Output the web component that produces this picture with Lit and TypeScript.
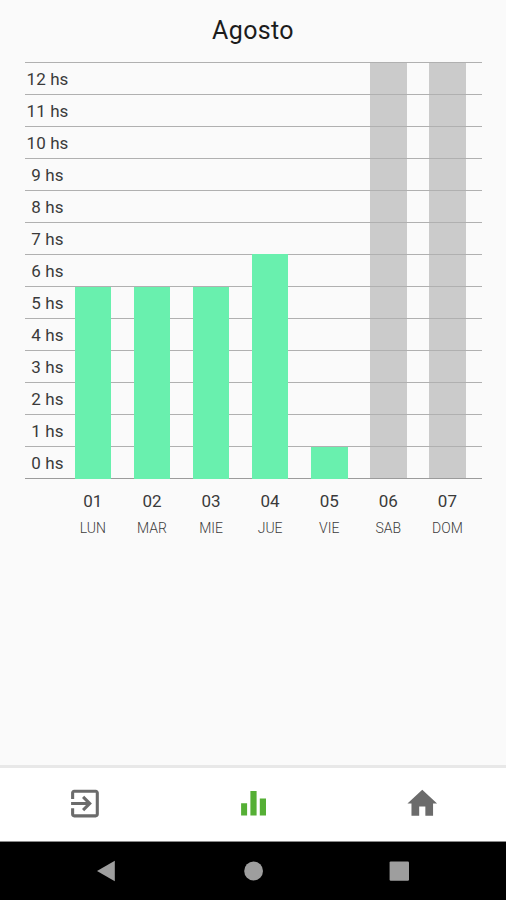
import { LitElement, html, css } from "lit";
import { customElement, state } from "lit/decorators.js";

interface Day {
  num: string;
  name: string;
  hours: number;
  off?: boolean;
}

const MAX_HOURS = 12;
const ROWS = MAX_HOURS + 1;

@customElement("hours-chart")
class HoursChart extends LitElement {
  @state() private days: Day[] = [
    { num: "01", name: "LUN", hours: 5 },
    { num: "02", name: "MAR", hours: 5 },
    { num: "03", name: "MIE", hours: 5 },
    { num: "04", name: "JUE", hours: 6 },
    { num: "05", name: "VIE", hours: 0 },
    { num: "06", name: "SAB", hours: 0, off: true },
    { num: "07", name: "DOM", hours: 0, off: true },
  ];

  static styles = css`
    :host { display: block; padding: 0 24px 0 25px; }
    .plot { display: grid; grid-template: 417px / 1fr; isolation: isolate; }
    .scale, .bars { grid-area: 1 / 1; }
    .scale {
      z-index: 1;
      display: flex;
      flex-direction: column;
      border-bottom: 1px solid #b3b3b3;
    }
    .row {
      flex: 1;
      box-sizing: border-box;
      border-top: 1px solid #b0b0b0;
      box-shadow: 0 1px 0 rgba(0, 0, 0, 0.13);
      display: flex;
      align-items: center;
    }
    .hour {
      width: 45px;
      text-align: center;
      font-size: 17px;
      letter-spacing: 0.1px;
      line-height: 20px;
      color: #3a3a3a;
    }
    .bars, .labels {
      display: grid;
      grid-template-columns: repeat(7, 59.1px);
      margin-left: 38.3px;
      justify-items: center;
    }
    .bars { align-items: end; }
    .bar { width: 36.6px; background: #69f0ae; z-index: 2; }
    .bar.off { background: #cbcbcb; z-index: 0; }
    .labels { margin-top: 11px; }
    .day { display: flex; flex-direction: column; align-items: center; }
    .num { font-size: 17px; line-height: 22px; color: #3a3a3a; }
    .name { font-size: 14px; line-height: 18px; margin-top: 7px; color: #3c3c3c; font-weight: 300; }
  `;

  render() {
    const hours = Array.from({ length: ROWS }, (_, i) => MAX_HOURS - i);
    return html`
      <div class="plot">
        <div class="scale">
          ${hours.map((h) => html`<div class="row"><span class="hour">${h} hs</span></div>`)}
        </div>
        <div class="bars">
          ${this.days.map(
            (d) => html`<div
              class="bar ${d.off ? "off" : ""}"
              style="height:${d.off ? 100 : ((d.hours + 1) / ROWS) * 100}%"
            ></div>`
          )}
        </div>
      </div>
      <div class="labels">
        ${this.days.map(
          (d) => html`<div class="day"><span class="num">${d.num}</span><span class="name">${d.name}</span></div>`
        )}
      </div>
    `;
  }
}

@customElement("tab-bar")
class TabBar extends LitElement {
  static styles = css`
    :host {
      display: grid;
      grid-template-columns: repeat(3, 1fr);
      place-items: center;
      box-sizing: border-box;
      height: 77px;
      padding-bottom: 2px;
      background: #fff;
      border-top: 3px solid #e8e8e8;
      border-bottom: 1px solid #8a8a8a;
      color: #6b6b6b;
    }
    svg { display: block; width: 37px; height: 37px; fill: currentColor; }
    .active { color: #55af35; }
  `;

  render() {
    return html`
      <svg viewBox="-.3 0 24 24">
        <path d="M10.09 15.59L11.5 17l5-5-5-5-1.41 1.41L12.67 11H3v2h9.67l-2.58 2.59zM19 3H5c-1.11 0-2 .9-2 2v4h2V5h14v14H5v-4H3v4c0 1.1.89 2 2 2h14c1.1 0 2-.9 2-2V5c0-1.1-.9-2-2-2z" />
      </svg>
      <svg class="active" viewBox="-.8 0 37 37">
        <path d="M6.3 18.2h6v12.4h-6zM15.6 6h6.2v24.6h-6.2zM25 13.4h6.2v17.2H25z" />
      </svg>
      <svg viewBox="-.5 0 24 24"><path d="M10 20v-6h4v6h5v-8h2.6L12 3 2.4 12H5v8z" /></svg>
    `;
  }
}

@customElement("system-nav")
class SystemNav extends LitElement {
  static styles = css`
    :host {
      display: flex;
      justify-content: center;
      align-items: center;
      gap: 124px;
      height: 58px;
      background: #000;
    }
    svg { display: block; width: 22px; height: 22px; fill: #9e9e9e; }
  `;

  render() {
    return html`
      <svg viewBox="0 0 22 22"><path d="M18.8 .8v20.4L1 11z" /></svg>
      <svg viewBox="0 0 22 22"><circle cx="11.6" cy="11" r="9.4" /></svg>
      <svg viewBox="0 0 22 22"><rect x="1.6" y="1.4" width="19.4" height="19.4" rx="1.2" /></svg>
    `;
  }
}

@customElement("app-root")
class AppRoot extends LitElement {
  static styles = css`
    :host {
      display: flex;
      flex-direction: column;
      height: 900px;
      background: #fafafa;
      font-family: Roboto, "Liberation Sans", sans-serif;
    }
    .title {
      height: 62px;
      line-height: 62px;
      text-align: center;
      font-size: 25px;
      font-weight: 400;
      letter-spacing: 0.35px;
      color: #1c1c1c;
      margin: 0;
    }
    .content { flex: 1; }
  `;

  render() {
    return html`
      <div class="content">
        <h1 class="title">Agosto</h1>
        <hours-chart></hours-chart>
      </div>
      <tab-bar></tab-bar>
      <system-nav></system-nav>
    `;
  }
}
